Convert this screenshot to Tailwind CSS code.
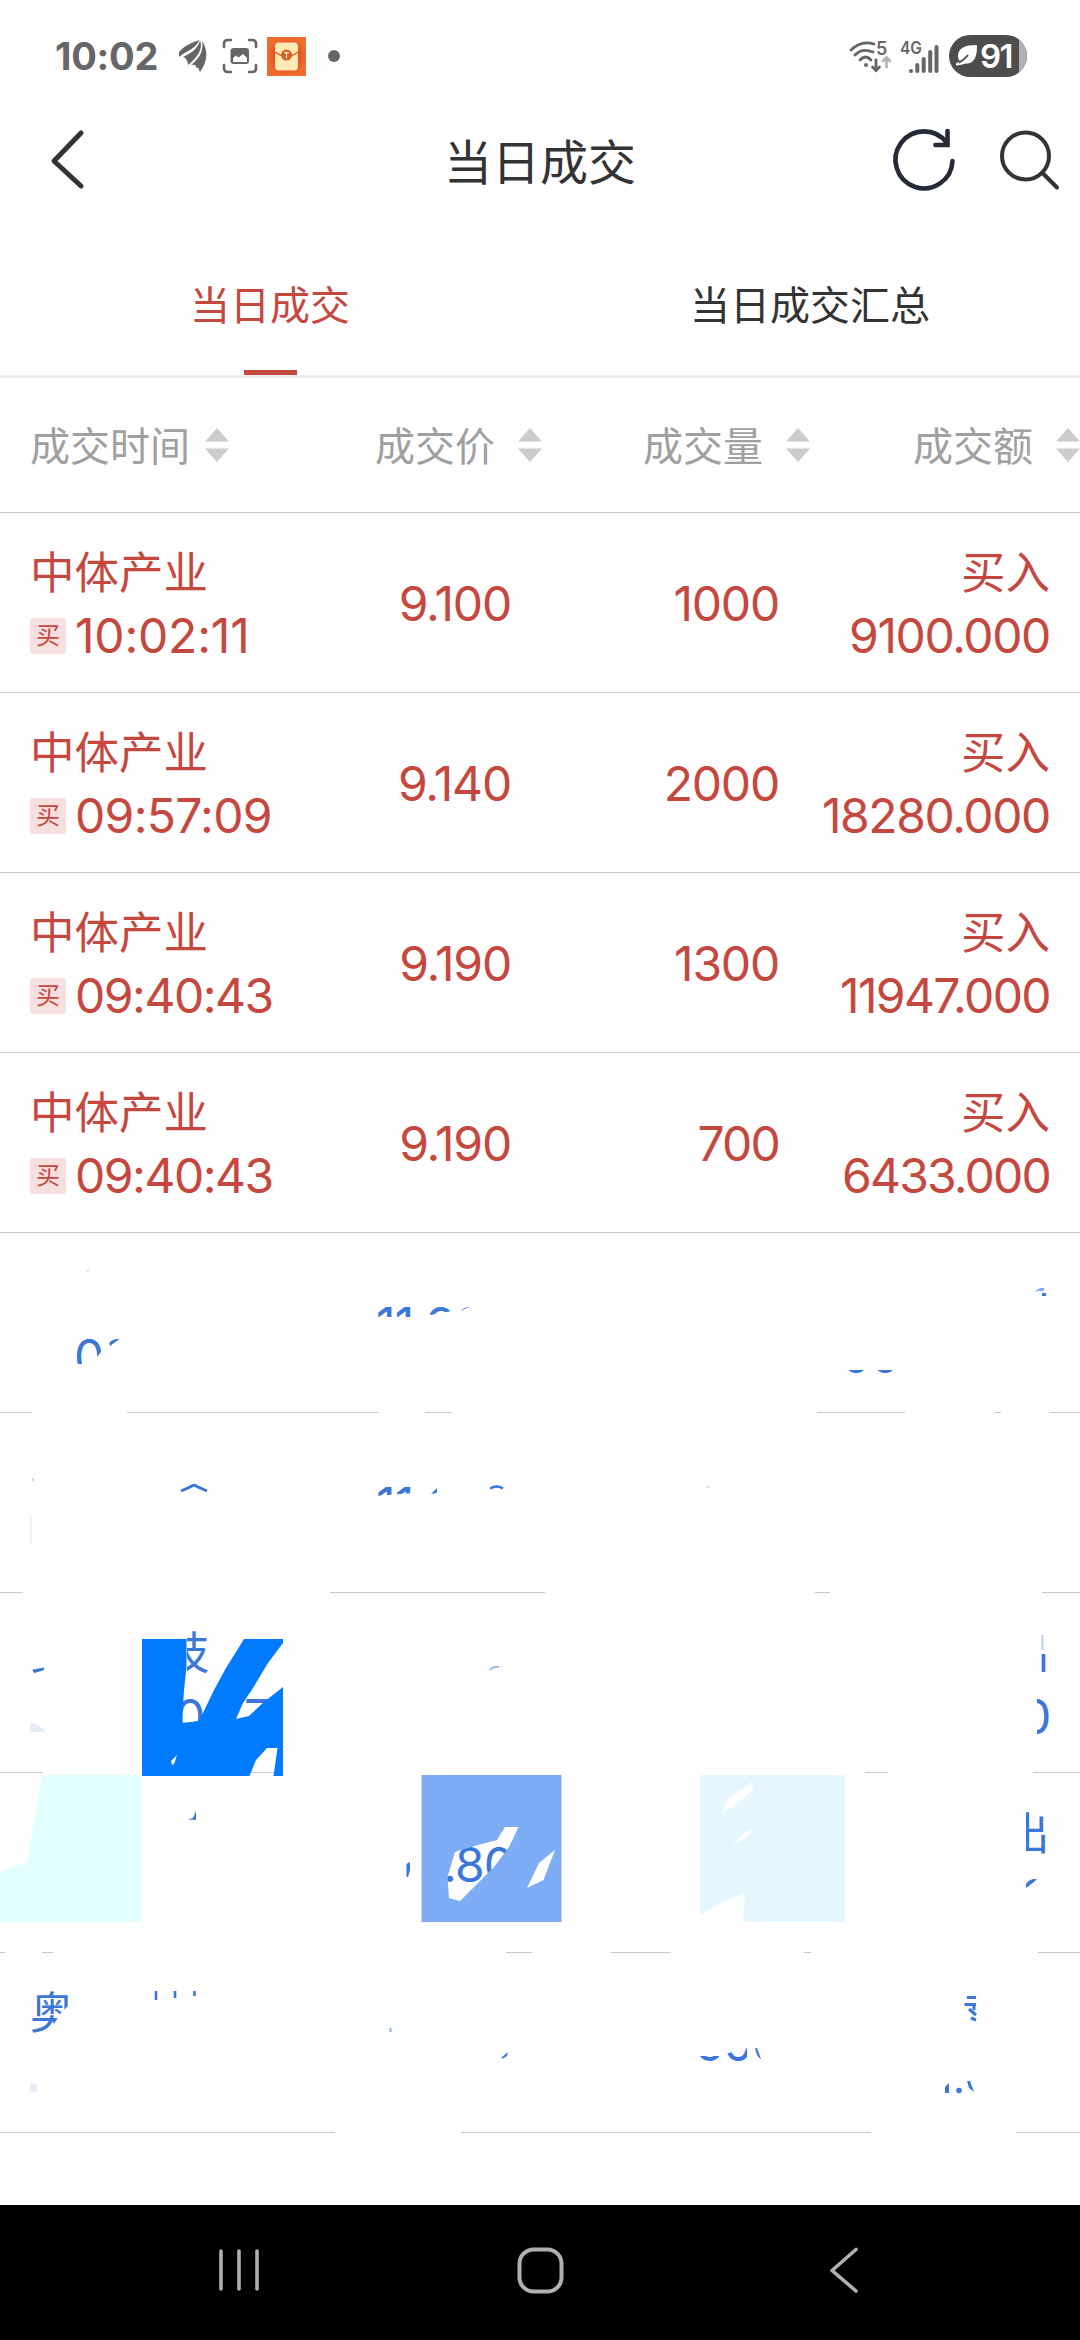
<!DOCTYPE html>
<html lang="zh-CN">
<head>
  <meta charset="UTF-8" />
  <meta name="viewport" content="width=device-width, initial-scale=1.0" />
  <title>当日成交</title>
  <script src="https://cdn.jsdelivr.net/npm/@tailwindcss/browser@4"></script>
</head>
<body class="bg-[#fefefe] font-['Inter','Noto_Sans_CJK_SC',sans-serif] text-[#333]">
  <div class="flex h-[2340px] w-[1080px] flex-col overflow-hidden">

    <!-- Status bar -->
    <div class="flex h-[112px] shrink-0 items-center pr-[53px] pl-[55px] text-[#666]">
      <span class="w-[124px] text-[38px] leading-none font-bold tracking-[-0.2px]">10:02</span>
      <svg class="h-[34px] w-[28px]" viewBox="0 0 28 34" fill="#666">
        <path d="M0 13C5 7 12 4 20 1C18 9 9 11 0 18Z" />
        <path d="M4 18C12 14 19 10 21 1C24 9 20 17 9 26C9 22 7 19 4 18Z" />
        <path d="M12 26C20 20 25 12 23 2C30 12 28 24 21 33C19 31 21 28 17 29C18 26 15 25 12 26Z" />
      </svg>
      <svg class="ml-[15px] h-[36px] w-[36px]" viewBox="0 0 36 36" fill="none" stroke="#666" stroke-width="2.600" stroke-linecap="round">
        <path d="M2 9V6Q2 2 6 2H9M27 2H30Q34 2 34 6V9M34 27V30Q34 34 30 34H27M9 34H6Q2 34 2 30V27" />
        <rect x="8.500" y="10" width="18.500" height="16" rx="3" fill="#666" stroke="none" />
        <path d="M11 24V20L14 17.500L16.500 19.500L21 16L25 20V24Z" fill="#fff" stroke="none" />
      </svg>
      <svg class="ml-[9px] h-[39px] w-[39px]" viewBox="0 0 39 39">
        <defs>
          <radialGradient id="glow"><stop offset="0.500" stop-color="#e4491c" /><stop offset="1" stop-color="#ef6d2e" /></radialGradient>
        </defs>
        <rect width="39" height="39" fill="url(#glow)" />
        <rect x="8" y="5.500" width="23" height="28" rx="4" fill="#fdeab5" />
        <path d="M8 15Q13 19 19.500 19.500Q26 19 31 15" fill="none" stroke="#e05a28" stroke-width="1.500" />
        <circle cx="19.500" cy="18" r="5.500" fill="#d95c25" />
        <path d="M17 15.700H22M19.500 15.700V21.500" stroke="#fdeab5" stroke-width="1.200" />
      </svg>
      <span class="ml-[22px] h-3 w-3 rounded-full bg-[#666]"></span>

      <svg class="ml-auto h-[36px] w-[44px]" viewBox="0 0 44 36" fill="none" stroke="#666" stroke-width="2.800" stroke-linecap="round">
        <path d="M2 12Q12 2 25 6M6 17Q13 9.500 24 14M11 22Q16.500 16 22 22" />
        <circle cx="17" cy="27" r="2" fill="#666" stroke="none" />
        <path d="M27 22V32M23.500 29L27 32.500L30.500 29" />
        <path d="M37.500 29V20M34 23L37.500 19.500L41 23" stroke="#b5b5b5" />
        <text x="27" y="17" font-size="18" font-weight="600" fill="#666" stroke="none">5</text>
      </svg>
      <svg class="ml-[4px] h-[40px] w-[44px]" viewBox="-2 -4 44 40" stroke="#666" stroke-width="4" stroke-linecap="round">
        <text x="1" y="14" font-size="17" font-weight="600" fill="#666" stroke="none" textLength="22" lengthAdjust="spacingAndGlyphs">4G</text>
        <path d="M12 31V31.100M18.300 25V31M24.700 19V31M31.200 12V31M37.500 7V31" />
      </svg>
      <div class="relative ml-[8px] flex h-[42px] w-[78px] items-center overflow-hidden rounded-full bg-[#4d4d4d] text-white">
        <div class="absolute top-0 right-0 h-full w-[8px] bg-[#b0b0b0]"></div>
        <svg class="ml-[6px] h-[22px] w-[22px] shrink-0" viewBox="0 0 22 22">
          <path d="M22 0C10 0 3 3 3 11C3 14 4 15 5 16L1 18.500V20.500C8 20 10 18 13 18.500C21 17 22 9 22 0Z" fill="#fff" />
          <path d="M4 17.500Q9 15 13 10" stroke="#4d4d4d" stroke-width="2" fill="none" />
        </svg>
        <span class="ml-[3px] text-[33px] leading-none font-semibold tracking-[-1.500px]">91</span>
      </div>
    </div>

    <!-- Title bar -->
    <div class="grid h-[98px] shrink-0 grid-cols-[1fr_auto_1fr] items-center pr-[18px] pl-[18px]">
      <svg class="ml-[29px] h-[64px] w-[64px]" viewBox="0 0 64 64" fill="none" stroke="#333" stroke-width="5" stroke-linecap="round" stroke-linejoin="round">
        <path d="M34 4L7 32L34 57" />
      </svg>
      <h1 class="pt-[4px] text-[48px] leading-none">当日成交</h1>
      <div class="flex justify-end gap-[40px]">
        <svg class="h-[68px] w-[68px]" viewBox="0 0 68 68" fill="none" stroke="#252a36" stroke-width="4.600" stroke-linecap="round">
          <path d="M62.500 34A28.500 28.500 0 1 1 57 16M57.500 4V18H45.500" />
        </svg>
        <svg class="h-[68px] w-[64px]" viewBox="0 0 64 68" fill="none" stroke="#333" stroke-width="4" stroke-linecap="round">
          <circle cx="27.500" cy="29" r="23.500" />
          <path d="M44.500 46L59 60.500" />
        </svg>
      </div>
    </div>

    <!-- Tabs -->
    <div class="grid h-[168px] shrink-0 grid-cols-2 border-b-3 border-[#eee] text-[40px] leading-none">
      <div class="flex flex-col items-center justify-between pt-[76px] text-[#c5483f]">
        <span>当日成交</span>
        <span class="h-[5px] w-[53px] bg-[#c5483f]"></span>
      </div>
      <div class="flex flex-col items-center pt-[76px]">
        <span>当日成交汇总</span>
      </div>
    </div>

    <!-- Column headings -->
    <div class="grid h-[135px] shrink-0 grid-cols-[229px_313px_268px_270px] border-b border-[#c8c8c8] text-[40px] leading-none text-[#a0a0a0]">
      <div class="flex items-center justify-end gap-[15px]">
        <span class="pt-[3px]">成交时间</span>
        <svg class="h-[34px] w-[24px]" viewBox="0 0 24 34" fill="#ccc"><path d="M0 13.500L12 0L24 13.500ZM0 20.500L12 34L24 20.500Z" /></svg>
      </div>
      <div class="flex items-center justify-end gap-[23px]">
        <span class="pt-[3px]">成交价</span>
        <svg class="h-[34px] w-[24px]" viewBox="0 0 24 34" fill="#ccc"><path d="M0 13.500L12 0L24 13.500ZM0 20.500L12 34L24 20.500Z" /></svg>
      </div>
      <div class="flex items-center justify-end gap-[23px]">
        <span class="pt-[3px]">成交量</span>
        <svg class="h-[34px] w-[24px]" viewBox="0 0 24 34" fill="#ccc"><path d="M0 13.500L12 0L24 13.500ZM0 20.500L12 34L24 20.500Z" /></svg>
      </div>
      <div class="flex items-center justify-end gap-[23px]">
        <span class="pt-[3px]">成交额</span>
        <svg class="h-[34px] w-[24px]" viewBox="0 0 24 34" fill="#ccc"><path d="M0 13.500L12 0L24 13.500ZM0 20.500L12 34L24 20.500Z" /></svg>
      </div>
    </div>

    <!-- Trades -->
    <div class="shrink-0 text-[48px] leading-none tracking-[-1.200px] whitespace-nowrap text-[#c5483f]">
      <div class="grid h-[180px] grid-cols-[213px_268px_268px_271px] items-center border-b border-[#c8c8c8] pl-[30px]">
        <div class="flex flex-col gap-[17px] pt-[6px]">
          <span class="text-[44.500px] tracking-normal">中体产业</span>
          <div class="flex items-center gap-[9px]">
            <span class="flex h-[36px] w-[36px] shrink-0 items-center justify-center rounded-[3px] bg-[#f6dfde] text-[24px] tracking-normal">买</span>
            <span class="tracking-[-0.200px]">10:02:11</span>
          </div>
        </div>
        <span class="pt-[2px] text-right">9.100</span>
        <span class="pt-[2px] text-right">1000</span>
        <div class="flex flex-col items-end gap-[17px] pt-[6px]">
          <span class="text-[44.500px] tracking-normal">买入</span>
          <span class="tracking-[-1.400px]">9100.000</span>
        </div>
      </div>
      <div class="grid h-[180px] grid-cols-[213px_268px_268px_271px] items-center border-b border-[#c8c8c8] pl-[30px]">
        <div class="flex flex-col gap-[17px] pt-[6px]">
          <span class="text-[44.500px] tracking-normal">中体产业</span>
          <div class="flex items-center gap-[9px]">
            <span class="flex h-[36px] w-[36px] shrink-0 items-center justify-center rounded-[3px] bg-[#f6dfde] text-[24px] tracking-normal">买</span>
            <span class="tracking-[-0.700px]">09:57:09</span>
          </div>
        </div>
        <span class="pt-[2px] text-right">9.140</span>
        <span class="pt-[2px] text-right">2000</span>
        <div class="flex flex-col items-end gap-[17px] pt-[6px]">
          <span class="text-[44.500px] tracking-normal">买入</span>
          <span class="tracking-[-1.400px]">18280.000</span>
        </div>
      </div>
      <div class="grid h-[180px] grid-cols-[213px_268px_268px_271px] items-center border-b border-[#c8c8c8] pl-[30px]">
        <div class="flex flex-col gap-[17px] pt-[6px]">
          <span class="text-[44.500px] tracking-normal">中体产业</span>
          <div class="flex items-center gap-[9px]">
            <span class="flex h-[36px] w-[36px] shrink-0 items-center justify-center rounded-[3px] bg-[#f6dfde] text-[24px] tracking-normal">买</span>
            <span class="tracking-[-1.500px]">09:40:43</span>
          </div>
        </div>
        <span class="pt-[2px] text-right">9.190</span>
        <span class="pt-[2px] text-right">1300</span>
        <div class="flex flex-col items-end gap-[17px] pt-[6px]">
          <span class="text-[44.500px] tracking-normal">买入</span>
          <span class="tracking-[-1.600px]">11947.000</span>
        </div>
      </div>
      <div class="grid h-[180px] grid-cols-[213px_268px_268px_271px] items-center border-b border-[#c8c8c8] pl-[30px]">
        <div class="flex flex-col gap-[17px] pt-[6px]">
          <span class="text-[44.500px] tracking-normal">中体产业</span>
          <div class="flex items-center gap-[9px]">
            <span class="flex h-[36px] w-[36px] shrink-0 items-center justify-center rounded-[3px] bg-[#f6dfde] text-[24px] tracking-normal">买</span>
            <span class="tracking-[-1.500px]">09:40:43</span>
          </div>
        </div>
        <span class="pt-[2px] text-right">9.190</span>
        <span class="pt-[2px] text-right tracking-[-1.800px]">700</span>
        <div class="flex flex-col items-end gap-[17px] pt-[6px]">
          <span class="text-[44.500px] tracking-normal">买入</span>
          <span class="tracking-[-1.800px]">6433.000</span>
        </div>
      </div>
    </div>

    <!-- Hidden trades: rubbed-out rows, only scraps of them show -->
    <svg class="h-[972px] w-[1080px] shrink-0" viewBox="0 1233 1080 972" fill="#3b76d8" font-size="48">
      <defs>
        <clipPath id="time5"><path d="M74 1345L82 1338H101V1352L97 1357L94 1345L84 1346L82 1364H74ZM108 1338H121L110 1346Z" /></clipPath>
        <clipPath id="price5"><path d="M376 1305H413V1317H376ZM428 1305H452V1311L430 1315ZM459 1305H474L460 1311Z" /></clipPath>
        <clipPath id="price6"><path d="M376 1485H413V1493L376 1496ZM431 1494L437 1488V1493Z" /></clipPath>
        <clipPath id="amount5"><path d="M840 1370H895V1375H840Z" /></clipPath>
        <clipPath id="name7"><path d="M187 1625H212V1680H187Z" /></clipPath>
        <clipPath id="amount7"><path d="M1037 1690H1055V1740H1037Z" /></clipPath>
        <clipPath id="side8"><path d="M1026 1805H1050V1860H1026Z" /></clipPath>
        <clipPath id="amount8"><path d="M1026 1874H1042L1034 1882L1026 1888Z" /></clipPath>
        <clipPath id="name9"><path d="M50 1988H68V2006L60 2014L54 2024L40 2033H31V1994H42Z" /></clipPath>
        <clipPath id="qty9"><path d="M696 2056H719V2064H696ZM725 2054L747 2048V2064H725ZM752 2048H757L761 2059H752Z" /></clipPath>
      </defs>

      <!-- row rules, in pieces -->
      <path d="M0 1412.500H32M127 1412.500H378M425 1412.500H452M817 1412.500H905M995 1412.500H1001M1050 1412.500H1080
               M0 1592.500H23M330 1592.500H545M815 1592.500H830M1042 1592.500H1080
               M0 1772.500H43M249 1772.500H275M865 1772.500H888M1033 1772.500H1080
               M0 1952.500H5M42 1952.500H53M506 1952.500H532M611 1952.500H671M804 1952.500H811M1038 1952.500H1080
               M0 2132.500H335M461 2132.500H871M1016 2132.500H1080" stroke="#c8c8c8" fill="none" shape-rendering="crispEdges" />

      <g clip-path="url(#time5)"><text x="74" y="1374" letter-spacing="-0.800">09</text></g>
      <g clip-path="url(#price5)"><text x="376" y="1342" letter-spacing="-0.800">11.98</text></g>
      <g clip-path="url(#amount5)"><text x="841" y="1373" letter-spacing="-1.200">00</text></g>
      <path d="M1034 1292L1040 1288H1044V1291H1038Z" opacity="0.600" />
      <rect x="1042" y="1293" width="4" height="3" />
      <path d="M86 1271H89" stroke="#b9d3e6" stroke-width="1" />

      <g clip-path="url(#price6)"><text x="376" y="1522" letter-spacing="-0.800">11.98</text></g>
      <path d="M490 1488.500Q497 1484.500 503 1488.500" fill="none" stroke="#3b76d8" stroke-width="2.500" />
      <path d="M181 1491L191 1486.500Q194 1484 197 1486.500L207 1491" fill="none" stroke="#3b76d8" stroke-width="3" />
      <rect x="30" y="1516" width="1.500" height="28" fill="#dfeefb" />
      <rect x="32" y="1478" width="2" height="3" fill="#c5dce8" />
      <rect x="706" y="1486" width="4" height="2" fill="#dcdff5" />

      <path d="M33 1670L44 1668L43 1670L34 1672.500Z" stroke="#3b76d8" />
      <path d="M30 1723L36 1724L45 1730V1732H30Z" fill="#e4ecfa" />
      <g clip-path="url(#name7)"><text x="165" y="1669" font-size="44.500">技</text></g>
      <text x="175" y="1733.500">0</text>
      <text x="244" y="1733.500">7</text>
      <path d="M490 1670Q493 1666 499 1667" fill="none" stroke="#7fa6e6" stroke-width="1.500" />
      <path d="M1042.500 1635V1650" stroke="#b9cdf1" stroke-width="1.800" />
      <path d="M1043.500 1654V1672" stroke="#3b76d8" stroke-width="3.600" />
      <g clip-path="url(#amount7)"><text x="1021" y="1733.500">0</text></g>
      <path fill="#007aff" fill-rule="evenodd" d="M142 1639H186.500V1667L184 1690L182 1723L198 1721L203 1713L214 1690L226 1668L231 1660L244 1639H283V1643L268 1663L253 1688L243 1703L236 1719L249 1716L264 1702L283 1687V1776H273.500L277.500 1748H267L256 1760L249.500 1776H142ZM171 1761L177 1755L174 1764L172 1765Z" />

      <path d="M42 1775H141.500V1922H0V1872L27 1862Z" fill="#e2ffff" />
      <path d="M188 1819.500L193 1818L196 1811V1820Z" />
      <path d="M406.500 1864L410 1862V1870L408 1877H406.500Z" />
      <text x="443" y="1882" letter-spacing="-0.800">.80</text>
      <path fill="#7eadf5" fill-rule="evenodd" d="M421.500 1775H561.500V1922H421.500ZM505 1827H518.500L509 1847L494 1867L470 1891L460 1901L449 1898L447.500 1877L455 1852L478 1845L497 1840ZM555 1850L543.500 1880L527 1888L539 1863Z" />
      <path fill="#e6f6ff" fill-rule="evenodd" d="M700 1775H844.500V1922H743L745 1893L722 1902L700 1915ZM752 1782L753 1790L733 1807L722 1813L728 1798ZM755 1827L747 1837L732 1846L743 1834Z" />
      <g clip-path="url(#side8)"><text x="1005" y="1850" font-size="44.500">出</text></g>
      <g clip-path="url(#amount8)"><text x="1020" y="1914">0</text></g>

      <g clip-path="url(#name9)"><text x="30" y="2029" font-size="44.500">奥</text></g>
      <path d="M156 1991V2000M175 1991V1998M194.500 1991V1996" fill="none" stroke="#3b76d8" stroke-width="2.600" />
      <rect x="389.500" y="2028" width="2" height="4" opacity="0.600" />
      <path d="M501 2058L508 2052L507 2056L503 2058.500Z" />
      <g clip-path="url(#qty9)"><text x="695" y="2061" letter-spacing="-1.200">500</text></g>
      <path d="M967 1997.500H976M964.500 2004.500H976M969 2009L976 2015M974 2006V2010M971 2018L976 2020" fill="none" stroke="#3b76d8" stroke-width="3" />
      <path d="M945 2093V2087L949 2083V2093Z" />
      <circle cx="959" cy="2090.500" r="2.800" />
      <path d="M967 2081H970L974 2092L969 2088Z" />
      <path d="M30 2083L37 2085V2092H30Z" fill="#e4ecfa" />
    </svg>

    <!-- System navigation -->
    <div class="flex h-[135px] shrink-0 items-center justify-between bg-black px-[216px] pb-[5px]">
      <svg class="h-[48px] w-[48px]" viewBox="0 0 48 48" fill="none" stroke="#b0b0b0" stroke-width="3.600" stroke-linecap="round"><path d="M5 5V43M23 5V43M41 5V43" /></svg>
      <svg class="h-[48px] w-[48px]" viewBox="0 0 48 48" fill="none" stroke="#b0b0b0" stroke-width="4"><rect x="3.500" y="3.500" width="42" height="42" rx="14" /></svg>
      <svg class="h-[48px] w-[48px]" viewBox="0 0 48 48" fill="none" stroke="#b0b0b0" stroke-width="3.600" stroke-linecap="round" stroke-linejoin="round"><path d="M40 3.500L16 24.500L40 45" /></svg>
    </div>
  </div>
</body>
</html>
